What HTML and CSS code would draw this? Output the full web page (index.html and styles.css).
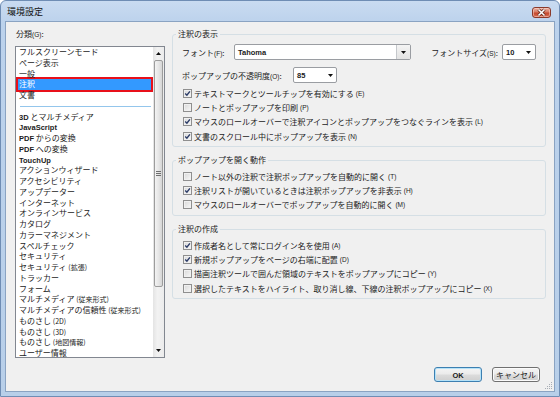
FILE: index.html
```html
<!DOCTYPE html>
<html lang="ja">
<head>
  <meta charset="UTF-8" />
  <title>環境設定</title>
  <link rel="stylesheet" href="styles.css">
</head>
<body>
  <div class="window">
    <div class="titlebar">
      <span class="title">環境設定</span>
      <button class="close">
        <svg width="19" height="11" viewBox="0 0 19 11">
          <path d="M6.5 2.5l6 6M12.5 2.5l-6 6" stroke="#5a2418" stroke-width="3" />
          <path d="M6.5 2.5l6 6M12.5 2.5l-6 6" stroke="#fff" stroke-width="1.6" />
        </svg>
      </button>
    </div>

    <div class="client">
      <div class="main">
        <div class="category">
          <div class="cat-label">分類<span class="mn">(G)</span>:</div>
          <div class="listbox">
            <ul class="items">
              <li>フルスクリーンモード</li>
              <li>ページ表示</li>
              <li>一般</li>
              <li class="selected">注釈</li>
              <li>文書</li>
              <li class="sep"></li>
              <li><span class="lat">3D</span> とマルチメディア</li>
              <li><span class="lat">JavaScript</span></li>
              <li><span class="lat">PDF</span> からの変換</li>
              <li><span class="lat">PDF</span> への変換</li>
              <li><span class="lat">TouchUp</span></li>
              <li>アクションウィザード</li>
              <li>アクセシビリティ</li>
              <li>アップデーター</li>
              <li>インターネット</li>
              <li>オンラインサービス</li>
              <li>カタログ</li>
              <li>カラーマネジメント</li>
              <li>スペルチェック</li>
              <li>セキュリティ</li>
              <li>セキュリティ <span class="sm">(拡張)</span></li>
              <li>トラッカー</li>
              <li>フォーム</li>
              <li>マルチメディア <span class="sm">(従来形式)</span></li>
              <li>マルチメディアの信頼性 <span class="sm">(従来形式)</span></li>
              <li>ものさし <span class="sm">(2D)</span></li>
              <li>ものさし <span class="sm">(3D)</span></li>
              <li>ものさし <span class="sm">(地図情報)</span></li>
              <li>ユーザー情報</li>
              <li>レビュー</li>
            </ul>
            <div class="vscroll">
              <div class="arrow"><svg width="5" height="3" viewBox="0 0 5 3"><path d="M0 3h5L2.5 0z" /></svg></div>
              <div class="thumb">
                <svg width="5" height="5" viewBox="0 0 5 5"><path d="M0 0.5h5M0 2.5h5M0 4.5h5" stroke="#6e6e6e" stroke-width="1" /></svg>
              </div>
              <div class="track"></div>
              <div class="arrow"><svg width="5" height="3" viewBox="0 0 5 3"><path d="M0 0h5L2.5 3z" /></svg></div>
            </div>
          </div>
        </div>

        <div class="settings">
          <fieldset class="group">
            <legend>注釈の表示</legend>
            <div class="font-row">
              <span class="font-label">フォント<span class="mn">(F)</span>:</span>
              <div class="combo combo-font">
                <span class="val lat">Tahoma</span>
                <span class="drop"><svg width="5" height="3" viewBox="0 0 5 3"><path d="M0 0h5L2.5 3z" /></svg></span>
              </div>
              <span class="size-label">フォントサイズ<span class="mn">(S)</span>:</span>
              <div class="combo combo-size">
                <span class="val lat">10</span>
                <svg width="5" height="3" viewBox="0 0 5 3"><path d="M0 0h5L2.5 3z" /></svg>
              </div>
            </div>
            <div class="opacity-row">
              <span class="opacity-label">ポップアップの不透明度<span class="mn">(O)</span>:</span>
              <div class="combo combo-opacity">
                <span class="val lat">85</span>
                <svg width="5" height="3" viewBox="0 0 5 3"><path d="M0 0h5L2.5 3z" /></svg>
              </div>
            </div>
            <div class="checks first">
              <div class="check"><span class="cb on"><svg width="7" height="7" viewBox="0 0 7 7"><path d="M1.2 3.6L2.9 5.3L5.9 1.4" /></svg></span>テキストマークとツールチップを有効にする<span class="mn">(E)</span></div>
              <div class="check"><span class="cb"></span>ノートとポップアップを印刷<span class="mn">(P)</span></div>
              <div class="check"><span class="cb on"><svg width="7" height="7" viewBox="0 0 7 7"><path d="M1.2 3.6L2.9 5.3L5.9 1.4" /></svg></span>マウスのロールオーバーで注釈アイコンとポップアップをつなぐラインを表示<span class="mn">(L)</span></div>
              <div class="check"><span class="cb on"><svg width="7" height="7" viewBox="0 0 7 7"><path d="M1.2 3.6L2.9 5.3L5.9 1.4" /></svg></span>文書のスクロール中にポップアップを表示<span class="mn">(N)</span></div>
            </div>
          </fieldset>

          <fieldset class="group">
            <legend>ポップアップを開く動作</legend>
            <div class="checks">
              <div class="check"><span class="cb"></span>ノート以外の注釈で注釈ポップアップを自動的に開く<span class="mn">(T)</span></div>
              <div class="check"><span class="cb on"><svg width="7" height="7" viewBox="0 0 7 7"><path d="M1.2 3.6L2.9 5.3L5.9 1.4" /></svg></span>注釈リストが開いているときは注釈ポップアップを非表示<span class="mn">(H)</span></div>
              <div class="check"><span class="cb"></span>マウスのロールオーバーでポップアップを自動的に開く<span class="mn">(M)</span></div>
            </div>
          </fieldset>

          <fieldset class="group">
            <legend>注釈の作成</legend>
            <div class="checks">
              <div class="check"><span class="cb on"><svg width="7" height="7" viewBox="0 0 7 7"><path d="M1.2 3.6L2.9 5.3L5.9 1.4" /></svg></span>作成者名として常にログイン名を使用<span class="mn">(A)</span></div>
              <div class="check"><span class="cb on"><svg width="7" height="7" viewBox="0 0 7 7"><path d="M1.2 3.6L2.9 5.3L5.9 1.4" /></svg></span>新規ポップアップをページの右端に配置<span class="mn">(D)</span></div>
              <div class="check"><span class="cb"></span>描画注釈ツールで囲んだ領域のテキストをポップアップにコピー<span class="mn">(Y)</span></div>
              <div class="check"><span class="cb"></span>選択したテキストをハイライト、取り消し線、下線の注釈ポップアップにコピー<span class="mn">(X)</span></div>
            </div>
          </fieldset>
        </div>
      </div>

      <div class="buttons">
        <button class="btn default"><span class="lat">OK</span></button>
        <button class="btn">キャンセル</button>
      </div>

      <svg class="grip" width="8" height="8" viewBox="0 0 8 8">
        <path d="M6 0h1v1H6zM4 2h1v1H4zM6 2h1v1H6zM2 4h1v1H2zM4 4h1v1H4zM6 4h1v1H6zM0 6h1v1H0zM2 6h1v1H2zM4 6h1v1H4zM6 6h1v1H6z" fill="#a7adb5" />
      </svg>
    </div>
  </div>
</body>
</html>
```

FILE: styles.css
```css
* {
  box-sizing: border-box;
}

body {
  margin: 0;
  background: #fff;
  font-family: "Noto Sans CJK JP", sans-serif;
  font-size: 8px;
  color: #1b1b1b;
}

.window {
  width: 560px;
  height: 397px;
  display: flex;
  flex-direction: column;
  padding: 0 4px 4px 4px;
  border: 1px solid #6f8db4;
  border-radius: 6px 6px 0 0;
  background: linear-gradient(#c9dbf1, #bcd2ec 22px, #b8cfe9);
}

/* title bar */
.titlebar {
  height: 20px;
  display: flex;
  align-items: flex-start;
}

.title {
  padding: 5px 0 0 2px;
  font-size: 9px;
  line-height: 12px;
  color: #111;
}

.close {
  margin: 6px 4px 0 auto;
  width: 19px;
  height: 11px;
  padding: 0;
  border: 1px solid #8a3a2b;
  border-radius: 3px;
  background: linear-gradient(#eab0a2, #d77b64 45%, #c4482d 55%, #d86c52);
  box-shadow: inset 0 0 0 1px rgba(255, 220, 210, 0.5);
  display: flex;
}

.close svg {
  margin: -1px;
}

/* client area */
.client {
  position: relative;
  flex: 1;
  padding: 6px 8px 0 9px;
  border: 1px solid #8aa3c2;
  background: #f0f0f0;
}

.main {
  display: flex;
  gap: 7px;
  height: 330px;
}

.category {
  width: 150px;
}

.cat-label {
  height: 12px;
  line-height: 12px;
  margin: 0 0 6px 1px;
}

.mn {
  font-family: "Liberation Sans", sans-serif;
  font-size: 6.5px;
}

.lat {
  font-family: "Liberation Sans", sans-serif;
  font-weight: bold;
  font-size: 7.5px;
}

.sm {
  font-size: 7px;
}

/* category list */
.listbox {
  height: 312px;
  display: flex;
  border: 1px solid #828790;
  background: #fff;
}

.items {
  flex: 1;
  margin: 0;
  padding: 0;
  list-style: none;
  overflow: hidden;
}

.items li {
  height: 10.75px;
  line-height: 10.75px;
  padding-left: 3px;
  white-space: nowrap;
}

.items li.selected {
  margin: -2px 0;
  height: 14.75px;
  line-height: 14.75px;
  color: #fff;
  background: #3399ff;
  box-shadow: inset 0 0 0 2px #e8101a;
}

.items li.sep {
  display: flex;
  align-items: center;
  padding: 0 2px 0 4px;
}

.items li.sep::after {
  content: "";
  flex: 1;
  height: 1px;
  background: #94c6ec;
}

.vscroll {
  width: 11px;
  display: flex;
  flex-direction: column;
  background: linear-gradient(90deg, #e4e4e4, #f2f2f2 40%, #ececec);
}

.arrow {
  height: 13px;
  display: flex;
  align-items: center;
  justify-content: center;
}

.arrow path,
.combo path {
  fill: #111;
}

.thumb {
  height: 227px;
  margin: 0 1px;
  display: flex;
  align-items: center;
  justify-content: center;
  border: 1px solid #9c9c9c;
  border-radius: 2px;
  background: linear-gradient(90deg, #f3f3f3, #e6e6e6 50%, #d6d6d6);
}

.track {
  flex: 1;
}

/* option groups */
.settings {
  width: 374px;
}

.group {
  margin: 0 0 7px 0;
  padding: 0 9px 3px 9px;
  min-inline-size: 0;
  border: 1px solid #d5dfe5;
  border-radius: 3px;
}

.group legend {
  padding: 0 2px;
  margin-left: -6px;
  line-height: 12px;
  font-size: 8px;
}

.font-row,
.opacity-row {
  display: flex;
  align-items: center;
  white-space: nowrap;
}

.font-row {
  margin-top: 4px;
}

.opacity-row {
  margin-top: 7px;
}

.font-label {
  width: 52px;
}

.opacity-label {
  width: 111px;
}

.size-label {
  margin: 0 4px 0 auto;
}

.combo {
  height: 16px;
  display: flex;
  align-items: center;
  justify-content: space-between;
  padding: 0 3px 0 3px;
  border: 1px solid #9a9da2;
  border-radius: 2px;
  background: #fff;
}

.combo-font {
  width: 177px;
  padding-right: 0;
}

.combo-size {
  width: 34px;
  padding-right: 4px;
}

.combo-opacity {
  width: 44px;
  padding-right: 3px;
}

.drop {
  width: 14px;
  height: 14px;
  display: flex;
  align-items: center;
  justify-content: center;
  border-left: 1px solid #c5c8cc;
  background: linear-gradient(#f4f4f4, #e3e3e3);
}

.checks.first {
  margin-top: 3px;
}

.checks {
  margin-top: 3px;
}

.first {
  margin-top: 3px;
}

.check {
  height: 14.3px;
  display: flex;
  align-items: center;
  gap: 2px;
  margin-left: 1px;
  white-space: nowrap;
}

.cb {
  width: 9px;
  height: 9px;
  flex: none;
  display: flex;
  border: 1px solid #8f8f8f;
  background: linear-gradient(135deg, #d8d8d8, #f8f8f8);
  box-shadow: inset 0 0 0 1px #f0f0f0;
}

.cb path {
  fill: none;
  stroke: #2c3c68;
  stroke-width: 1.4;
}

/* dialog buttons */
.buttons {
  display: flex;
  justify-content: flex-end;
  gap: 10px;
  margin: 9px 6px 0 0;
}

.btn {
  width: 48px;
  height: 15px;
  padding: 0;
  font-family: "Noto Sans CJK JP", sans-serif;
  font-size: 8px;
  line-height: 13px;
  color: #1b1b1b;
  border: 1px solid #707070;
  border-radius: 3px;
  background: linear-gradient(#f4f4f4, #ebebeb 48%, #dcdcdc 52%, #cfcfcf);
  box-shadow: inset 0 0 0 1px #fbfbfb;
}

.btn.default {
  border-color: #3c7fb1;
  box-shadow: inset 0 0 0 1px #b5e2f8;
}

.grip {
  position: absolute;
  right: 1px;
  bottom: 1px;
}
```
